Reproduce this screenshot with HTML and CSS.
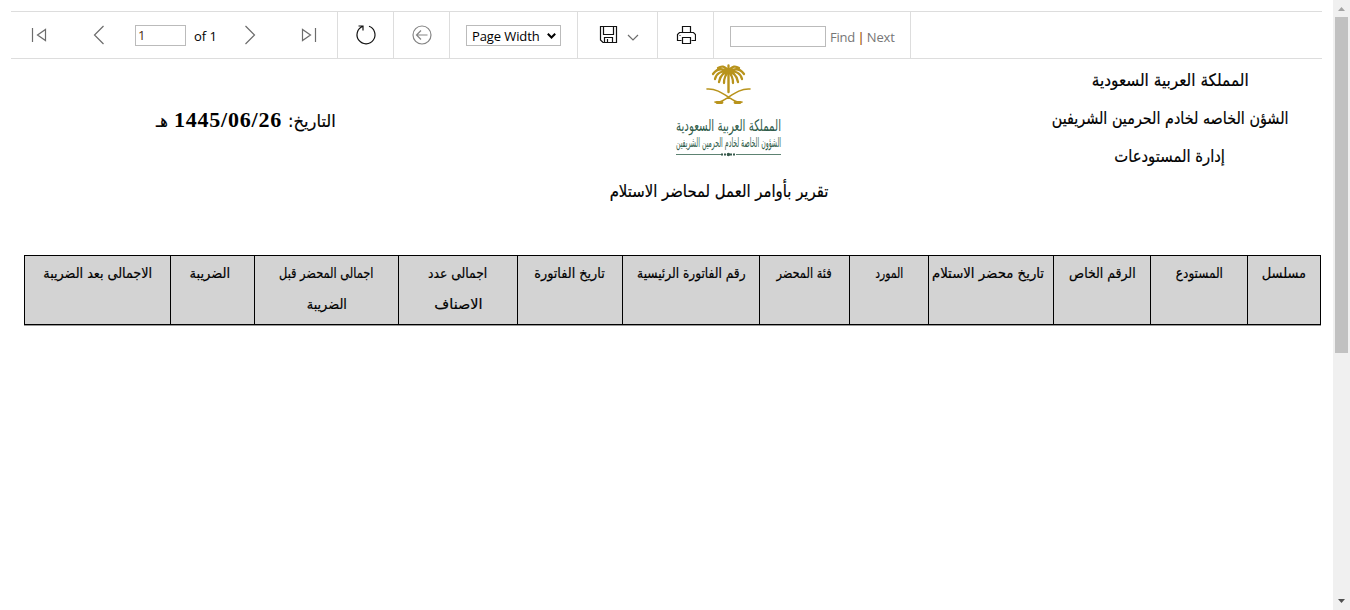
FILE: index.html
```html
<!DOCTYPE html>
<html lang="ar">
<head>
<meta charset="utf-8">
<title>Report</title>
<link rel="stylesheet" href="styles.css">
</head>
<body>
<main class="viewer">
  <div class="toolbar">
    <div class="group nav">
      <svg class="icon first" width="18" height="18" viewBox="0 0 18 18"><path d="M3.500 2v14M16.500 3.500v11L8.500 9z"/></svg>
      <svg class="icon prev" width="14" height="20" viewBox="0 0 14 20"><path d="M11.500 1 2.500 10l9 9"/></svg>
      <input class="page" value="1" aria-label="Page">
      <span class="of">of 1</span>
      <svg class="icon next" width="14" height="20" viewBox="0 0 14 20"><path d="M2.500 1l9 9-9 9"/></svg>
      <svg class="icon last" width="18" height="18" viewBox="0 0 18 18"><path d="M14.500 2v14M1.500 3.500v11L9.500 9z"/></svg>
    </div>
    <div class="group sq">
      <svg class="icon dark" width="22" height="22" viewBox="0 0 22 22"><path d="M14 2.300a9 9 0 1 1-6.500.2M3.500 2H8v4.500"/></svg>
    </div>
    <div class="group sq">
      <svg class="icon back" width="22" height="22" viewBox="0 0 22 22"><circle cx="11" cy="11" r="9"/><path d="M16.500 11H6M10 6.500 5.500 11l4.500 4.500"/></svg>
    </div>
    <div class="group zoom">
      <div class="select">Page Width<svg width="9" height="6" viewBox="0 0 9 6"><path d="M.8.800 4.500 4.500 8.200.800" fill="none" stroke="#000" stroke-width="2"/></svg></div>
    </div>
    <div class="group save">
      <svg class="icon dark" width="19" height="19" viewBox="0 0 19 19"><path d="M1.500 1.500h16v16H4l-2.500-2.500zM4.500 1.500v8h10v-8M5.500 17v-4.500h8V17M8.500 14v3"/></svg>
      <svg class="icon caret" width="12" height="7" viewBox="0 0 12 7"><path d="M1 1l5 5 5-5"/></svg>
    </div>
    <div class="group sq">
      <svg class="icon dark print" width="20" height="20" viewBox="0 0 20 20"><path d="M6.500 7.500v-6h8v6M5.500 15.500h-4v-6l2-2h14l2 2v6h-4M6.500 12.500h8v6h-8zM3.500 10.500h1"/></svg>
    </div>
    <div class="group find">
      <input class="query" aria-label="Find text">
      <span>Find <b>|</b> Next</span>
    </div>
  </div>

  <section class="head" dir="rtl">
    <div class="org">
      <p><span class="ar">المملكة العربية السعودية</span></p>
      <p><span class="ar">الشؤن الخاصه لخادم الحرمين الشريفين</span></p>
      <p><span class="ar">إدارة المستودعات</span></p>
    </div>
    <div class="logo">
      <svg width="108" height="94" viewBox="0 0 108 94" direction="rtl">
        <g fill="none" stroke="#b8931c" stroke-linecap="round">
          <path d="M53.500 8v20" stroke-width="2.400"/>
          <path stroke-width="2.300" d="M53.500 8C50 1 46 2 43 4M53.500 8C57 1 61 2 64 4M53.500 8C46 3 41 6 38 10M53.500 8C61 3 66 6 69 10M53.500 8C46 6 41 10 40 15M53.500 8C61 6 66 10 67 15M53.500 8C48 8 45 13 44 18M53.500 8C59 8 62 13 63 18M53.500 8C50 11 49 14 49 19M53.500 8C57 11 58 14 58 19M53.500 8V1.500"/>
          <path stroke-width="1.600" d="M32 25C43 24 52 33 60 37c4 2 7 1 7 1M75 25C64 24 55 33 47 37c-4 2-7 1-7 1"/>
          <path stroke-width="2.800" d="M42 38.500h5M60 38.500h5"/>
        </g>
        <g class="script">
          <text x="106" y="67" font-size="16" textLength="105" lengthAdjust="spacingAndGlyphs">المملكة العربية السعودية</text>
          <text x="106" y="83" font-size="13" textLength="105" lengthAdjust="spacingAndGlyphs">الشؤون الخاصة لخادم الحرمين الشريفين</text>
        </g>
        <path d="M1 90.500h45M61 90.500h45" stroke="#5d8272"/>
        <path d="M46 90.500h15" stroke="#36594b" stroke-width="2" stroke-dasharray="2 1"/>
        <circle cx="53.500" cy="90.500" r="1.700" fill="#36594b"/>
      </svg>
    </div>
    <div class="date"><span class="ar">التاريخ:</span><b>1445/06/26</b><span class="ar era">هـ</span></div>
  </section>

  <h1 dir="rtl"><span class="ar">تقرير بأوامر العمل لمحاضر الاستلام</span></h1>

  <div class="table" dir="rtl">
    <div><span class="ar">مسلسل</span></div>
    <div><span class="ar">المستودع</span></div>
    <div><span class="ar">الرقم الخاص</span></div>
    <div><span class="ar">تاريخ محضر الاستلام</span></div>
    <div><span class="ar">المورد</span></div>
    <div><span class="ar">فئة المحضر</span></div>
    <div><span class="ar">رقم الفاتورة الرئيسية</span></div>
    <div><span class="ar">تاريخ الفاتورة</span></div>
    <div><span class="ar">اجمالى عدد</span><span class="ar">الاصناف</span></div>
    <div><span class="ar">اجمالى المحضر قبل</span><span class="ar">الضريبة</span></div>
    <div><span class="ar">الضريبة</span></div>
    <div><span class="ar">الاجمالى بعد الضريبة</span></div>
  </div>
</main>
<aside class="scrollbar">
  <svg width="7" height="4" viewBox="0 0 7 4"><path d="M0 4 3.500 0 7 4z" fill="#a3a3a3"/></svg>
  <div class="thumb"></div>
  <svg width="7" height="4" viewBox="0 0 7 4"><path d="M0 0h7L3.500 4z" fill="#505050"/></svg>
</aside>
</body>
</html>
```
FILE: styles.css
```css
* { box-sizing: border-box; }
body { margin: 0; height: 610px; display: flex; overflow: hidden; background: #fff; color: #000; font-family: "Open Sans", "Noto Sans", sans-serif; }
.viewer { width: 1333px; padding: 11px 11px 0; }
.toolbar { display: flex; height: 48px; border: solid #ddd; border-width: 1px 0; font-size: 13px; }
.group { display: flex; align-items: center; border-right: 1px solid #ddd; height: 46px; }
.nav { width: 327px; padding-left: 18px; }
.sq { width: 56px; justify-content: center; padding-left: 1px; }
.zoom { width: 128px; padding-left: 16px; }
.save { width: 80px; padding-left: 21px; gap: 9px; }
.find { width: 197px; padding-left: 16px; gap: 4px; color: #767676; }
.find span { margin-top: 4px; letter-spacing: -.2px; word-spacing: -.8px; }
.find b { color: #a05a14; font-weight: 600; }
.icon { fill: none; stroke: #6c6c6c; stroke-width: 1.2; flex: none; margin-bottom: 1px; }
.back { stroke: #858585; }
.dark { stroke: #111; }
.caret { margin-top: 6px; }
.prev { margin-left: 45px; }
.page { margin-left: 29px; width: 51px; color: #4a2a10; }
.of { margin-left: 8px; width: 24px; white-space: nowrap; margin-top: 2px; }
.next { margin-left: 25px; }
.last { margin-left: 44px; }
input, .select { height: 21px; border: 1px solid #bbb; padding: 2px; font: 13px "Open Sans", sans-serif; background: #fff; border-radius: 0; }
.query { width: 96px; margin-top: 3px; }
.select { width: 95px; padding: 1px 4px 0 5px; display: flex; align-items: center; justify-content: space-between; margin-top: 1px; line-height: 18px; letter-spacing: -.1px; }

.ar { display: inline-block; font-family: "Traditional Arabic", "DejaVu Sans", sans-serif; white-space: nowrap; transform: scaleX(var(--sx, 1)); -webkit-text-stroke: .2px #000; }
.head { display: flex; height: 108px; font-size: 17px; }
.org { width: 304px; text-align: center; padding-top: 2px; }
.org p { margin: 0; height: 38px; line-height: 38px; }
.org p:nth-child(1) { --sx: .9; }
.org p:nth-child(2) { --sx: .845; }
.org p:nth-child(3) { --sx: .87; }
.logo { width: 108px; padding-top: 5px; margin-right: 235px; }
.logo svg { display: block; overflow: visible; }
.script { font-family: "DejaVu Sans", sans-serif; fill: #2f5c4a; }
.date { display: flex; margin-right: 338px; padding-top: 43px; gap: 5px; line-height: 38px; --sx: .96; }
.date b { font: bold 22px/36px "Liberation Serif", serif; letter-spacing: .8px; }
.era { --sx: .85; }
h1 { margin: 4px 0 0 105px; font-size: 17px; font-weight: 400; height: 84px; line-height: 40px; text-align: center; --sx: .875; }

.table { margin-left: 13px; width: 1297px; height: 70px; display: grid; grid-template-columns: 73px 97px 97px 125px 79px 90px 137px 105px 119px 144px 84px 1fr; border: 1px solid #000; background: #d3d3d3; font-size: 14px; box-shadow: 0 1px 0 #999; }
.table div { display: flex; flex-direction: column; align-items: center; line-height: 31px; padding-top: 2px; border-left: 1px solid #000; --sx: .93; }
.table div:last-child { border-left: 0; --sx: .91; }
.table div:nth-child(2) { --sx: .86; }
.table div:nth-child(3) { --sx: .89; }
.table div:nth-child(4) { --sx: .95; padding-right: 6px; }
.table div:nth-child(5) { --sx: .77; }
.table div:nth-child(6) { --sx: .81; }
.table div:nth-child(7) { --sx: .87; }
.table div:nth-child(8) { --sx: .915; }
.table div:nth-child(9) { --sx: .88; }
.table div:nth-child(9) .ar + .ar { --sx: 1.03; }
.table div:nth-child(10) { --sx: .81; }
.table div:nth-child(10) .ar + .ar { --sx: .92; }
.table div:nth-child(11) { padding-right: 6px; }

.scrollbar { width: 17px; height: 610px; background: #f0f0f0; display: flex; flex-direction: column; align-items: center; padding: 7px 0; }
.thumb { width: 13px; height: 336px; margin: 6px 0 auto; background: #c1c1c1; }
```
